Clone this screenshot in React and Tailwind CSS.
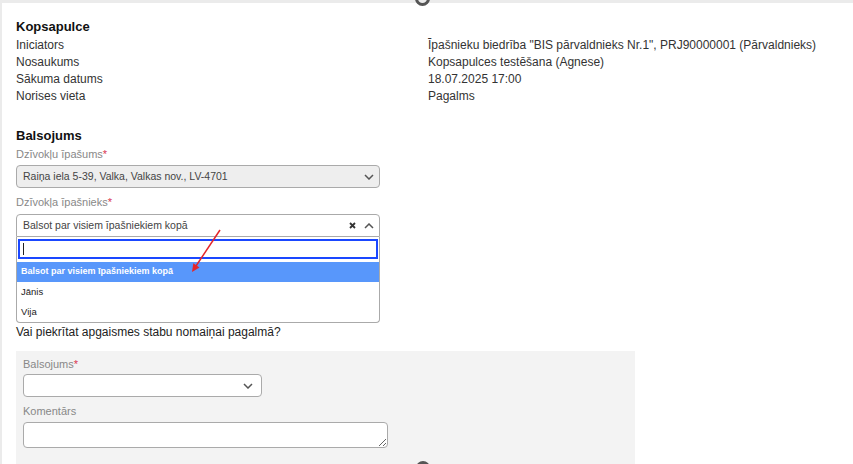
export default function App() {
  const Chevron = ({ up = false }) => (
    <svg width="10" height="6" viewBox="0 0 10 6" className="shrink-0">
      <path d={up ? "M1 5 L5 1 L9 5" : "M1 1 L5 5 L9 1"} fill="none" stroke="#555" strokeWidth="1.5" />
    </svg>
  );
  const Req = () => <span className="text-[#d9364f]">*</span>;
  return (
    <div className="relative w-[853px] h-[464px] overflow-hidden bg-[#ebebeb] font-['Liberation_Sans',Arial,sans-serif] text-[#333]">
      <div className="ml-[2px] mt-[3px] h-[461px] bg-white pl-[14px] pt-[14px]">
        <div className="text-[13px] leading-[20px] font-bold text-[#111]">Kopsapulce</div>
        <div className="grid grid-cols-[412px_1fr] text-[12px] leading-[17px]">
          <div>Iniciators</div>
          <div>Īpašnieku biedrība "BIS pārvaldnieks Nr.1", PRJ90000001 (Pārvaldnieks)</div>
          <div>Nosaukums</div>
          <div>Kopsapulces testēšana (Agnese)</div>
          <div>Sākuma datums</div>
          <div>18.07.2025 17:00</div>
          <div>Norises vieta</div>
          <div>Pagalms</div>
        </div>
        <div className="mt-[21px] text-[13px] leading-[20px] font-bold text-[#111]">Balsojums</div>
        <div className="mt-[2px] text-[11px] leading-[13px] text-[#888]">Dzīvokļu īpašums<Req /></div>
        <div className="mt-[4px] w-[364px] h-[23px] rounded-[4px] border border-[#aaa] bg-[#eee] flex items-center pl-[6px] pr-[5px] text-[10.5px] text-[#444]">
          <span className="flex-1">Raiņa iela 5-39, Valka, Valkas nov., LV-4701</span>
          <Chevron />
        </div>
        <div className="mt-[8px] text-[11px] leading-[13px] text-[#888]">Dzīvokļa īpašnieks<Req /></div>
        <div className="relative mt-[5px] w-[364px]">
          <div className="h-[23px] rounded-t-[4px] border border-[#aaa] bg-white flex items-center pl-[6px] pr-[5px] text-[10.5px] text-[#444]">
            <span className="flex-1">Balsot par visiem īpašniekiem kopā</span>
            <svg width="7" height="7" viewBox="0 0 7 7" className="mr-[8px]">
              <path d="M1 1 L6 6 M6 1 L1 6" stroke="#333" strokeWidth="1.8" />
            </svg>
            <Chevron up />
          </div>
          <div className="absolute left-0 top-full w-[364px] bg-white border-x border-b border-[#aaa] rounded-b-[4px] text-[9.5px]">
            <div className="px-[1px] pt-[2px]">
              <div className="h-[20px] border-2 border-[#1a47ff] flex items-center pl-[3px]">
                <span className="w-px h-[12px] bg-[#222]" />
              </div>
            </div>
            <div className="mt-[3px] h-[20px] bg-[#5897fb] text-white font-bold text-[9px] flex items-center pl-[4px]">Balsot par visiem īpašniekiem kopā</div>
            <div className="h-[20px] flex items-center pl-[4px] text-[#222]">Jānis</div>
            <div className="h-[20px] flex items-center pl-[4px] text-[#222]">Vija</div>
          </div>
        </div>
        <div className="mt-[87px] text-[12px] leading-[16px] text-[#222]">Vai piekrītat apgaismes stabu nomaiņai pagalmā?</div>
        <div className="mt-[11px] w-[619px] h-[200px] bg-[#f3f3f3] pl-[7px] pt-[7px]">
          <div className="text-[11px] leading-[13px] text-[#888]">Balsojums<Req /></div>
          <div className="mt-[3px] w-[239px] h-[23px] rounded-[4px] border border-[#aaa] bg-white flex items-center justify-end pr-[8px]">
            <Chevron />
          </div>
          <div className="mt-[8px] text-[11px] leading-[13px] text-[#888]">Komentārs</div>
          <textarea className="mt-[4px] block w-[365px] h-[26px] rounded-[4px] border border-[#aaa] bg-white" />
        </div>
      </div>
      <div className="absolute left-[415px] top-[-9px] w-[15px] h-[15px] rounded-full border-[3px] border-[#555]" />
      <div className="absolute left-[416px] top-[461px] w-[14px] h-[14px] rounded-full bg-[#555]" />
      <svg className="absolute left-0 top-0 pointer-events-none" width="853" height="464">
        <line x1="220" y1="230" x2="196" y2="266" stroke="#e4262a" strokeWidth="1.5" />
        <polygon points="192,272 199.5,267.5 193.3,263.2" fill="#e4262a" />
      </svg>
    </div>
  );
}
